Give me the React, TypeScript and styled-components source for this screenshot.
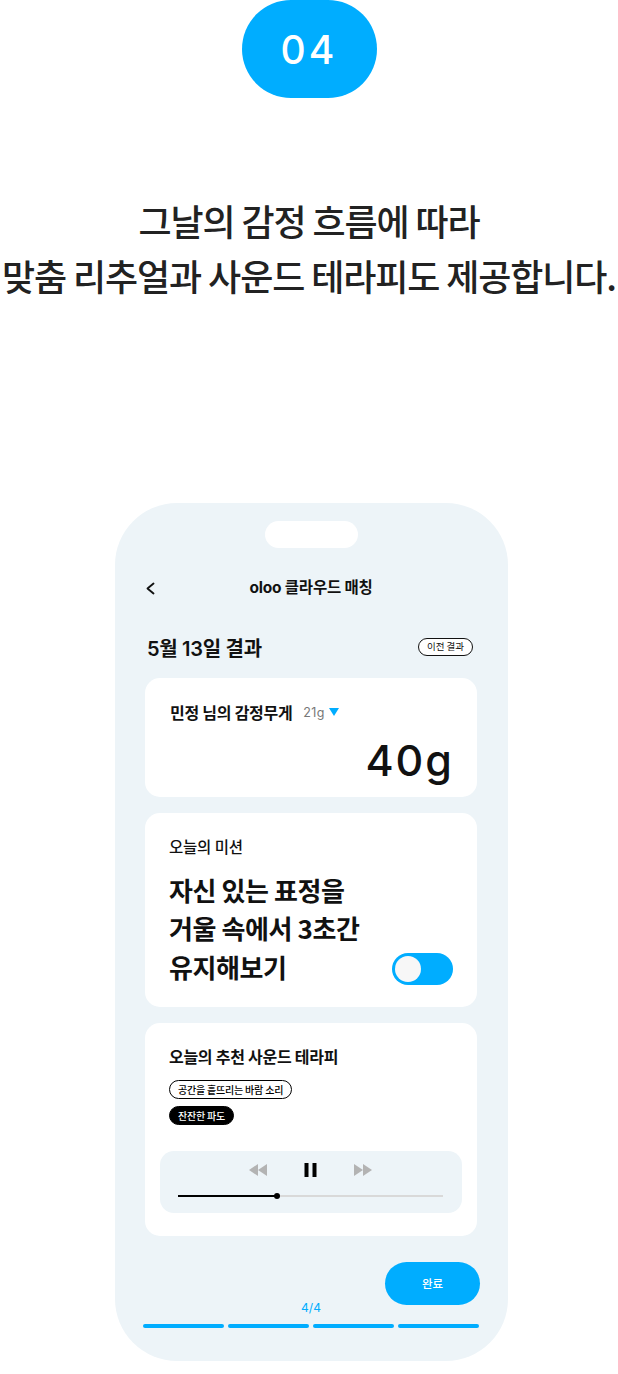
import styled, { createGlobalStyle } from 'styled-components';

const BLUE = '#00adff';

const GlobalStyle = createGlobalStyle`
  html, body {
    margin: 0;
    padding: 0;
    background: #fff;
  }
  body {
    font-family: Inter, 'Noto Sans CJK KR', sans-serif;
    color: #111;
  }
`;

const Page = styled.main`
  width: 618px;
  min-height: 1374px;
  display: flex;
  flex-direction: column;
  align-items: center;
`;

const StepBadge = styled.div`
  width: 135px;
  height: 98px;
  border-radius: 49px;
  background: ${BLUE};
  color: #fff;
  display: flex;
  align-items: center;
  justify-content: center;
  font-family: Inter, sans-serif;
  font-size: 39px;
  font-weight: 500;
  letter-spacing: 3px;
`;

const Heading = styled.h1`
  margin: 95px 0 0;
  font-family: 'Noto Sans CJK KR', sans-serif;
  font-size: 36px;
  font-weight: 500;
  line-height: 55px;
  letter-spacing: -1.1px;
  color: #222;
  text-align: center;
  white-space: nowrap;
`;

const Phone = styled.section`
  margin: 200px 0 0 4px;
  width: 393px;
  height: 858px;
  box-sizing: border-box;
  border-radius: 62px;
  background: #edf4f8;
  padding: 18px 0 0;
  display: flex;
  flex-direction: column;
  align-items: center;
`;

const Notch = styled.div`
  width: 93px;
  height: 27px;
  border-radius: 14px;
  background: #fff;
`;

const TopBar = styled.header`
  margin-top: 30px;
  width: 332px;
  height: 20px;
  display: grid;
  grid-template-columns: 1fr auto 1fr;
  align-items: center;
`;

const BackButton = styled.button`
  border: 0;
  background: none;
  padding: 0;
  width: 12px;
  height: 14px;
  display: flex;
  align-items: center;
  justify-self: start;
  svg {
    display: block;
  }
`;

const TopTitle = styled.h2`
  margin: 0;
  font-size: 15.5px;
  font-weight: 700;
  line-height: 20px;
  letter-spacing: -0.2px;
`;

const DateRow = styled.div`
  margin-top: 37px;
  width: 332px;
  box-sizing: border-box;
  padding: 0 4px 0 2px;
  height: 24px;
  display: flex;
  align-items: center;
  justify-content: space-between;
`;

const DateTitle = styled.h3`
  margin: 0;
  font-size: 20px;
  font-weight: 600;
  letter-spacing: -0.3px;
`;

const OutlinePill = styled.span`
  display: inline-flex;
  align-items: center;
  justify-content: center;
  box-sizing: border-box;
  height: 18px;
  padding: 0 8px;
  border: 1.3px solid #111;
  border-radius: 10px;
  font-family: 'Noto Sans CJK KR', sans-serif;
  font-size: 9.5px;
  line-height: 1;
  background: #fff;
`;

const Cards = styled.div`
  margin-top: 19px;
  width: 332px;
  display: flex;
  flex-direction: column;
  gap: 15.5px;
`;

const Card = styled.article<{ $pad: string; $height?: number }>`
  background: #fff;
  border-radius: 15px;
  box-sizing: border-box;
  padding: ${({ $pad }) => $pad};
  ${({ $height }) => ($height ? `height: ${$height}px;` : '')}
`;

const CardLabel = styled.div<{ $bold?: boolean }>`
  display: flex;
  align-items: center;
  height: 20px;
  font-size: ${({ $bold }) => ($bold ? 16 : 15.5)}px;
  font-weight: ${({ $bold }) => ($bold ? 700 : 500)};
  letter-spacing: -0.3px;
`;

const Previous = styled.span`
  margin-left: 11px;
  font-size: 12.5px;
  font-weight: 400;
  color: #777;
  letter-spacing: 0.3px;
`;

const DownMark = styled.span`
  margin-left: 4px;
  width: 0;
  height: 0;
  border-left: 5px solid transparent;
  border-right: 5px solid transparent;
  border-top: 8px solid ${BLUE};
`;

const Weight = styled.div`
  margin-top: 17px;
  text-align: right;
  font-family: Inter, sans-serif;
  font-size: 43px;
  font-weight: 500;
  line-height: 42px;
  letter-spacing: 2px;
`;

const MissionRow = styled.div`
  margin-top: 15px;
  display: flex;
  align-items: flex-end;
  justify-content: space-between;
`;

const MissionText = styled.p`
  margin: 0;
  font-family: 'Noto Sans CJK KR', sans-serif;
  font-size: 26px;
  font-weight: 700;
  line-height: 38.5px;
  letter-spacing: -0.4px;
`;

const Toggle = styled.div`
  width: 61px;
  height: 32px;
  border-radius: 16px;
  background: ${BLUE};
  box-sizing: border-box;
  padding: 3px;
  display: flex;
  align-items: center;
  margin-bottom: 1px;
`;

const Knob = styled.span`
  width: 26px;
  height: 26px;
  border-radius: 50%;
  background: #f7f7f7;
`;

const TherapyHead = styled.div`
  padding: 0 9px;
  display: flex;
  flex-direction: column;
  align-items: flex-start;
`;

const Tags = styled.div`
  margin-top: 14px;
  display: flex;
  flex-direction: column;
  align-items: flex-start;
  gap: 7px;
`;

const Tag = styled.span<{ $filled?: boolean }>`
  display: inline-flex;
  align-items: center;
  box-sizing: border-box;
  height: 19px;
  padding: 0 8px;
  border-radius: 10px;
  border: 1.3px solid #000;
  background: ${({ $filled }) => ($filled ? '#000' : '#fff')};
  color: ${({ $filled }) => ($filled ? '#fff' : '#000')};
  font-family: 'Noto Sans CJK KR', sans-serif;
  font-size: 10px;
  font-weight: 500;
  letter-spacing: -0.2px;
`;

const Player = styled.div`
  margin-top: 26px;
  height: 62px;
  box-sizing: border-box;
  border-radius: 14px;
  background: #edf4f8;
  padding: 12px 19px 0 18px;
`;

const Controls = styled.div`
  height: 14px;
  display: flex;
  align-items: center;
  justify-content: center;
  gap: 36px;
  svg {
    display: block;
  }
`;

const Track = styled.div`
  position: relative;
  margin-top: 16px;
  height: 6px;
  display: flex;
  align-items: center;
`;

const TrackLine = styled.div`
  width: 100%;
  height: 2px;
  background: #d9d9d9;
`;

const TrackFill = styled.div`
  position: absolute;
  left: 0;
  top: 2px;
  height: 2px;
  background: #000;
`;

const TrackDot = styled.span`
  position: absolute;
  top: 0;
  width: 6px;
  height: 6px;
  margin-left: -3px;
  border-radius: 50%;
  background: #000;
`;

const Footer = styled.div`
  margin-top: 26px;
  width: 336px;
  display: flex;
  flex-direction: column;
  align-items: center;
`;

const DoneRow = styled.div`
  width: 100%;
  display: flex;
  justify-content: flex-end;
`;

const DoneButton = styled.button`
  width: 95px;
  height: 43px;
  margin-right: -1px;
  border: 0;
  border-radius: 22px;
  background: ${BLUE};
  color: #fff;
  font-family: 'Noto Sans CJK KR', sans-serif;
  font-size: 11.5px;
  font-weight: 500;
`;

const StepCount = styled.div`
  margin-top: -3px;
  font-family: Inter, sans-serif;
  font-size: 12px;
  line-height: 12px;
  color: ${BLUE};
`;

const Steps = styled.div`
  margin-top: 10px;
  width: 100%;
  display: grid;
  grid-template-columns: repeat(4, 1fr);
  gap: 4.5px;
`;

const StepBar = styled.span`
  height: 4.5px;
  border-radius: 3px;
  background: ${BLUE};
`;

const progress = 0.375;

export default function App() {
  return (
    <Page>
      <GlobalStyle />
      <StepBadge>04</StepBadge>
      <Heading>
        그날의 감정 흐름에 따라
        <br />
        맞춤 리추얼과 사운드 테라피도 제공합니다.
      </Heading>

      <Phone>
        <Notch />
        <TopBar>
          <BackButton aria-label="뒤로">
            <svg width="11" height="13" viewBox="0 0 11 13">
              <polyline points="8.5,1.5 2.5,6.5 8.5,11.5" fill="none" stroke="#111" strokeWidth="1.9" strokeLinecap="round" strokeLinejoin="round" />
            </svg>
          </BackButton>
          <TopTitle>oloo 클라우드 매칭</TopTitle>
          <span />
        </TopBar>

        <DateRow>
          <DateTitle>5월 13일 결과</DateTitle>
          <OutlinePill>이전 결과</OutlinePill>
        </DateRow>

        <Cards>
          <Card $pad="24px 23px 0 25px" $height={119}>
            <CardLabel $bold>
              민정 님의 감정무게
              <Previous>21g</Previous>
              <DownMark />
            </CardLabel>
            <Weight>40g</Weight>
          </Card>

          <Card $pad="23px 24px 21px 24px">
            <CardLabel>오늘의 미션</CardLabel>
            <MissionRow>
              <MissionText>
                자신 있는 표정을
                <br />
                거울 속에서 3초간
                <br />
                유지해보기
              </MissionText>
              <Toggle>
                <Knob />
              </Toggle>
            </MissionRow>
          </Card>

          <Card $pad="23px 15px 23px 15px">
            <TherapyHead>
              <CardLabel $bold>오늘의 추천 사운드 테라피</CardLabel>
              <Tags>
                <Tag>공간을 흩뜨리는 바람 소리</Tag>
                <Tag $filled>잔잔한 파도</Tag>
              </Tags>
            </TherapyHead>
            <Player>
              <Controls>
                <svg width="20" height="12" viewBox="0 0 20 12">
                  <polygon points="10,0 10,12 1,6" fill="#b3b3b3" />
                  <polygon points="19,0 19,12 10,6" fill="#b3b3b3" />
                </svg>
                <svg width="13" height="14" viewBox="0 0 13 14">
                  <rect x="0.5" y="0" width="4" height="14" fill="#000" />
                  <rect x="8.5" y="0" width="4" height="14" fill="#000" />
                </svg>
                <svg width="20" height="12" viewBox="0 0 20 12">
                  <polygon points="1,0 1,12 10,6" fill="#b3b3b3" />
                  <polygon points="10,0 10,12 19,6" fill="#b3b3b3" />
                </svg>
              </Controls>
              <Track>
                <TrackLine />
                <TrackFill style={{ width: `${progress * 100}%` }} />
                <TrackDot style={{ left: `${progress * 100}%` }} />
              </Track>
            </Player>
          </Card>
        </Cards>

        <Footer>
          <DoneRow>
            <DoneButton>완료</DoneButton>
          </DoneRow>
          <StepCount>4/4</StepCount>
          <Steps>
            <StepBar />
            <StepBar />
            <StepBar />
            <StepBar />
          </Steps>
        </Footer>
      </Phone>
    </Page>
  );
}
